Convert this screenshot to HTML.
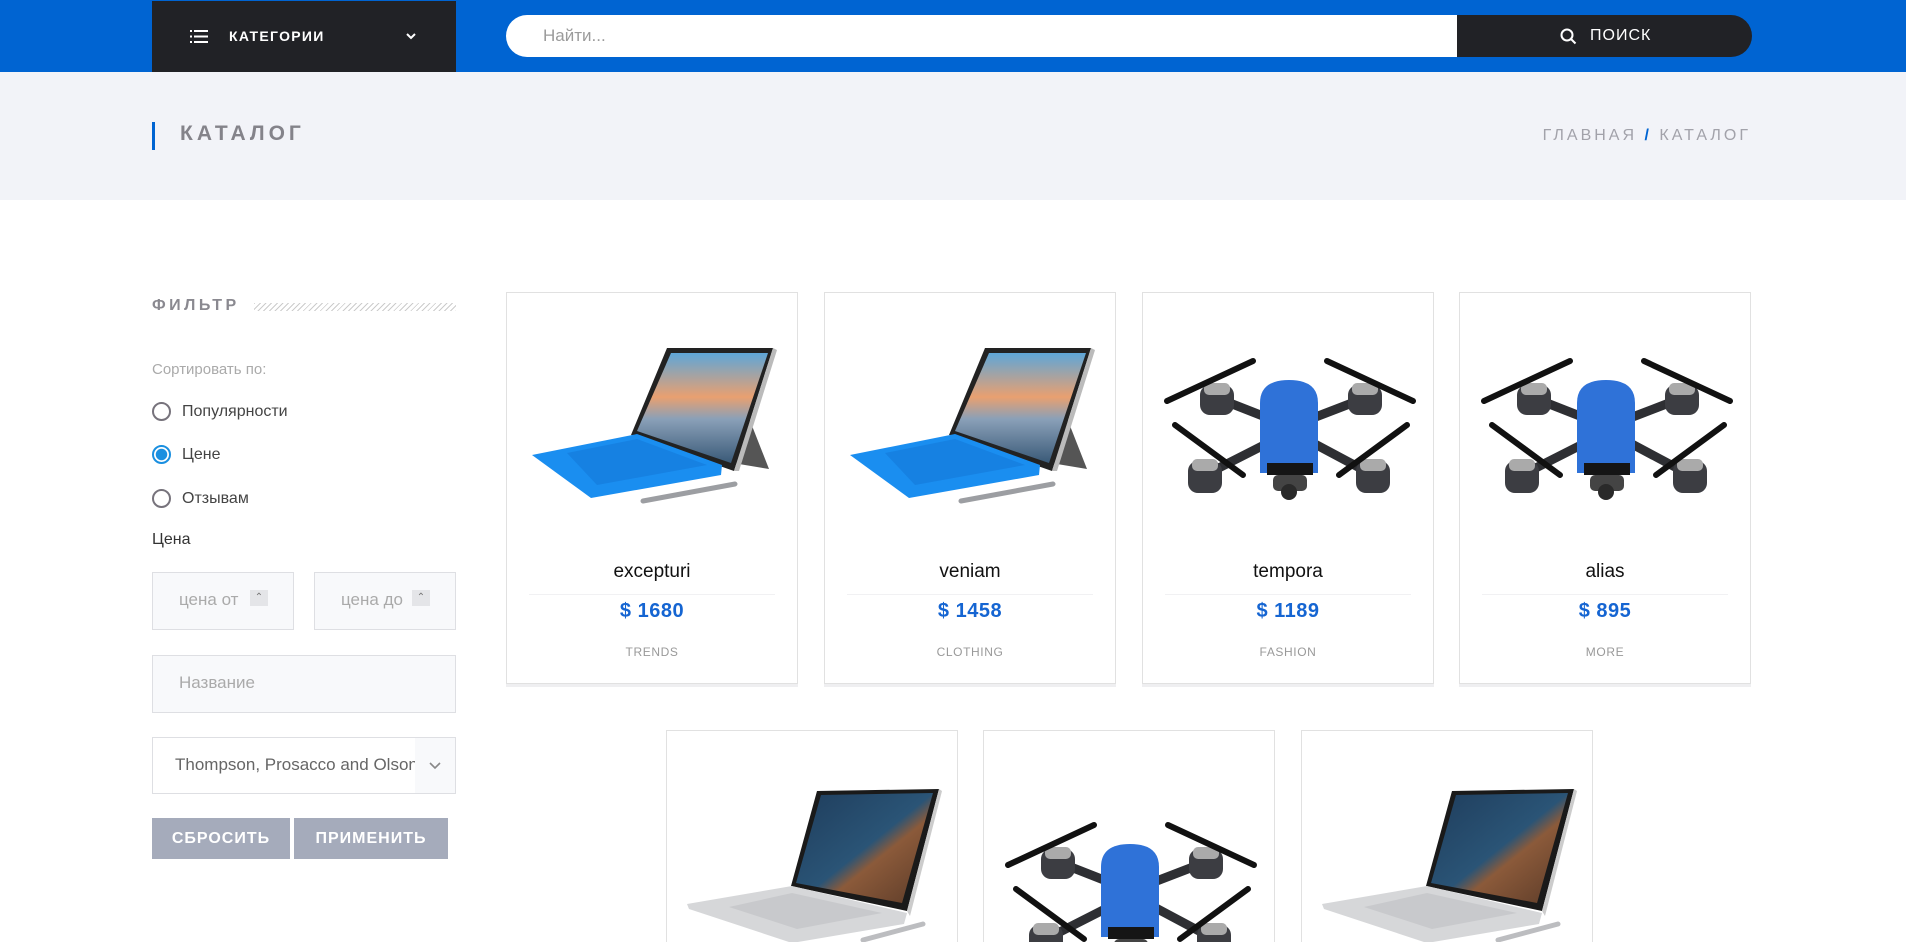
<!DOCTYPE html>
<html style="width:1906px;height:944px;overflow:hidden"><head><meta charset="utf-8">
<style>
*{margin:0;padding:0;box-sizing:border-box}
body{width:1906px;height:944px;overflow:hidden;background:#fff;font-family:"Liberation Sans",Arial,sans-serif;position:relative}
.abs{position:absolute}
.nav{left:0;top:0;width:1906px;height:72px;background:#0064d2}
.cat{left:152px;top:1px;width:304px;height:71px;background:#212226;color:#fff;font-size:14px;font-weight:bold;letter-spacing:1.3px}
.search{left:506px;top:15px;width:951px;height:42px;background:#fff;border-radius:21px 0 0 21px;color:#9b9b9b;font-size:17px;padding:11px 0 0 37px}
.sbtn{left:1457px;top:15px;width:295px;height:42px;background:#212226;border-radius:0 21px 21px 0;color:#fff;font-size:16px;letter-spacing:1px}
.crumb{left:0;top:72px;width:1906px;height:128px;background:#f2f3f8}
.card{width:292px;height:392px;border:1px solid #e1e1e1;background:#fff;box-shadow:0 3px 0 #efeff1;overflow:hidden}
.card svg{position:absolute;left:0;top:0}
.t{position:absolute;left:0;width:100%;text-align:center}
.ttl{top:268px;font-size:19px;color:#111}
.dv{position:absolute;left:22px;right:22px;top:301px;height:1px;background:#f1f1f3}
.pr{top:307px;font-size:20px;font-weight:bold;color:#1565d2;letter-spacing:.5px}
.cg{top:352px;font-size:12px;color:#999;letter-spacing:.6px}
.lbl{font-size:16px;color:#444}
.radio{width:19px;height:19px;border:2px solid #77737c;border-radius:50%}
.inp{background:#f8f9fb;border:1px solid #dedfe3;color:#aaa;font-size:17px}
.btn{background:#a5abbb;color:#fff;font-weight:bold;font-size:16px;letter-spacing:1px;text-align:center;line-height:41px;height:41px;top:818px}
.r2{top:730px;height:212px;box-shadow:none;border-bottom:none}
</style></head><body>
<svg width="0" height="0" style="position:absolute">
<defs>
<linearGradient id="sky" x1="0" y1="0" x2="0" y2="1"><stop offset="0" stop-color="#5ea6d8"/><stop offset=".4" stop-color="#e9a070"/><stop offset=".6" stop-color="#8aa0b8"/><stop offset="1" stop-color="#3a5a78"/></linearGradient>
<linearGradient id="lk" x1="0" y1="0" x2="1" y2="1"><stop offset="0" stop-color="#1f3d5c"/><stop offset=".5" stop-color="#2a5476"/><stop offset=".6" stop-color="#8b5a3a"/><stop offset="1" stop-color="#5a3a28"/></linearGradient>
<symbol id="tab" viewBox="0 0 292 260">
<polygon points="240,120 262,176 226,170" fill="#555"/>
<polygon points="160,55 266,55 227,178 124,142" fill="#222"/>
<polygon points="164,60 261,60 224,170 130,138" fill="url(#sky)"/>
<polygon points="266,55 270,57 232,178 227,178" fill="#bbb"/>
<polygon points="25,162 130,141 215,172 214,182 84,205" fill="#1a8ef0"/>
<polygon points="60,160 130,146 200,172 90,192" fill="#1478d8" opacity=".6"/>
<line x1="136" y1="208" x2="228" y2="191" stroke="#9c9ea2" stroke-width="5" stroke-linecap="round"/>
</symbol>
<symbol id="drone" viewBox="0 0 292 260">
<g stroke="#2e2f33" stroke-width="9"><line x1="74" y1="105" x2="125" y2="125"/><line x1="222" y1="105" x2="170" y2="125"/><line x1="62" y1="182" x2="125" y2="150"/><line x1="230" y1="182" x2="170" y2="150"/></g>
<g fill="#3c3d42"><rect x="57" y="92" width="34" height="30" rx="10"/><rect x="205" y="92" width="34" height="30" rx="10"/><rect x="45" y="168" width="34" height="32" rx="10"/><rect x="213" y="168" width="34" height="32" rx="10"/></g>
<g fill="#aaa"><rect x="61" y="90" width="26" height="12" rx="5"/><rect x="209" y="90" width="26" height="12" rx="5"/><rect x="49" y="166" width="26" height="12" rx="5"/><rect x="217" y="166" width="26" height="12" rx="5"/></g>
<g stroke="#111" stroke-width="6" stroke-linecap="round"><line x1="24" y1="108" x2="110" y2="68"/><line x1="184" y1="68" x2="270" y2="108"/><line x1="32" y1="132" x2="100" y2="182"/><line x1="196" y1="182" x2="264" y2="132"/></g>
<path d="M117 110 Q117 87 146 87 Q175 87 175 110 L175 180 L117 180Z" fill="#2f72d8"/>
<rect x="124" y="170" width="46" height="12" fill="#151515"/>
<rect x="130" y="182" width="34" height="16" rx="5" fill="#444"/>
<circle cx="146" cy="199" r="8" fill="#2a2a2a"/>
</symbol>
<symbol id="lap" viewBox="0 0 292 260">
<polygon points="150,60 272,58 240,180 124,155" fill="#1a1a1a"/>
<polygon points="154,64 266,62 235,172 129,152" fill="url(#lk)"/>
<polygon points="272,58 275,60 243,185 240,180" fill="#ccc"/>
<polygon points="20,173 125,155 240,182 237,193 125,212 22,178" fill="#d6d7d9"/>
<polygon points="62,176 125,162 215,182 130,198" fill="#c8c9cc"/>
<line x1="196" y1="209" x2="256" y2="193" stroke="#bcbdc0" stroke-width="5" stroke-linecap="round"/>
</symbol>
</defs></svg>

<div class="abs nav"></div>
<div class="abs cat">
 <svg class="abs" style="left:38px;top:29px" width="18" height="13"><g fill="#fff"><rect x="0" y="0" width="2" height="2"/><rect x="4" y="0" width="14" height="2"/><rect x="0" y="5.5" width="2" height="2"/><rect x="4" y="5.5" width="14" height="2"/><rect x="0" y="11" width="2" height="2"/><rect x="4" y="11" width="14" height="2"/></g></svg>
 <span class="abs" style="left:77px;top:27px">КАТЕГОРИИ</span>
 <svg class="abs" style="left:254px;top:32px" width="10" height="7"><path d="M1 1 L5 5 L9 1" stroke="#fff" stroke-width="2" fill="none"/></svg>
</div>
<div class="abs search">Найти...</div>
<div class="abs sbtn"><svg class="abs" style="left:103px;top:13px" width="17" height="17"><circle cx="7" cy="7" r="5.5" stroke="#fff" stroke-width="2" fill="none"/><line x1="11" y1="11" x2="15.5" y2="15.5" stroke="#fff" stroke-width="2"/></svg><span class="abs" style="left:133px;top:12px">ПОИСК</span></div>

<div class="abs crumb"></div>
<div class="abs" style="left:152px;top:122px;width:3px;height:28px;background:#0064d2"></div>
<div class="abs" style="left:180px;top:122px;font-size:21px;font-weight:bold;color:#84838a;letter-spacing:4px">КАТАЛОГ</div>
<div class="abs" style="right:155px;top:127px;font-size:16px;color:#a2a2aa;letter-spacing:3px">ГЛАВНАЯ <span style="color:#0064d2;font-weight:bold">/</span> КАТАЛОГ</div>

<div class="abs" style="left:152px;top:297px;font-size:16px;font-weight:bold;color:#8a8990;letter-spacing:3.5px">ФИЛЬТР</div>
<div class="abs" style="left:254px;top:303px;width:202px;height:8px;background:repeating-linear-gradient(135deg,#ccc 0 1px,transparent 1px 4px)"></div>
<div class="abs" style="left:152px;top:361px;font-size:15px;color:#aaa">Сортировать по:</div>
<div class="abs radio" style="left:152px;top:402px"></div><div class="abs lbl" style="left:182px;top:403px">Популярности</div>
<div class="abs radio" style="left:152px;top:445px;border-color:#1a8fe0;background:radial-gradient(circle,#1a8fe0 0 5.5px,#fff 6px)"></div><div class="abs lbl" style="left:182px;top:446px">Цене</div>
<div class="abs radio" style="left:152px;top:489px"></div><div class="abs lbl" style="left:182px;top:490px">Отзывам</div>
<div class="abs lbl" style="left:152px;top:531px;color:#333">Цена</div>
<div class="abs inp" style="left:152px;top:572px;width:142px;height:58px;padding:17px 0 0 26px">цена от</div>
<div class="abs" style="left:250px;top:590px;width:18px;height:16px;background:#e4e5e8;color:#777;font-size:10px;text-align:center;line-height:16px">⌃</div>
<div class="abs inp" style="left:314px;top:572px;width:142px;height:58px;padding:17px 0 0 26px">цена до</div>
<div class="abs" style="left:412px;top:590px;width:18px;height:16px;background:#e4e5e8;color:#777;font-size:10px;text-align:center;line-height:16px">⌃</div>
<div class="abs inp" style="left:152px;top:655px;width:304px;height:58px;padding:17px 0 0 26px">Название</div>
<div class="abs" style="left:152px;top:737px;width:304px;height:57px;border:1px solid #dedfe3;background:#fff;overflow:hidden"><span class="abs" style="left:22px;top:17px;font-size:17px;color:#666;white-space:nowrap">Thompson, Prosacco and Olson</span><div class="abs" style="right:0;top:0;width:40px;height:55px;background:#f8f9fb"><svg class="abs" style="left:14px;top:24px" width="12" height="8"><path d="M1 1 L6 6 L11 1" stroke="#888" stroke-width="1.6" fill="none"/></svg></div></div>
<div class="abs btn" style="left:152px;width:138px">СБРОСИТЬ</div>
<div class="abs btn" style="left:294px;width:154px">ПРИМЕНИТЬ</div>

<div class="abs card" style="left:506px;top:292px"><svg width="292" height="260"><use href="#tab"/></svg><div class="t ttl">excepturi</div><div class="dv"></div><div class="t pr">$ 1680</div><div class="t cg">TRENDS</div></div>
<div class="abs card" style="left:824px;top:292px"><svg width="292" height="260"><use href="#tab"/></svg><div class="t ttl">veniam</div><div class="dv"></div><div class="t pr">$ 1458</div><div class="t cg">CLOTHING</div></div>
<div class="abs card" style="left:1142px;top:292px"><svg width="292" height="260"><use href="#drone"/></svg><div class="t ttl">tempora</div><div class="dv"></div><div class="t pr">$ 1189</div><div class="t cg">FASHION</div></div>
<div class="abs card" style="left:1459px;top:292px"><svg width="292" height="260"><use href="#drone"/></svg><div class="t ttl">alias</div><div class="dv"></div><div class="t pr">$ 895</div><div class="t cg">MORE</div></div>

<div class="abs card r2" style="left:666px"><svg width="292" height="212" viewBox="0 0 292 212"><use href="#lap" width="292" height="260"/></svg></div>
<div class="abs card r2" style="left:983px"><svg width="292" height="212" viewBox="0 0 292 212"><use href="#drone" y="26" width="292" height="260"/></svg></div>
<div class="abs card r2" style="left:1301px"><svg width="292" height="212" viewBox="0 0 292 212"><use href="#lap" width="292" height="260"/></svg></div>
</body></html>
